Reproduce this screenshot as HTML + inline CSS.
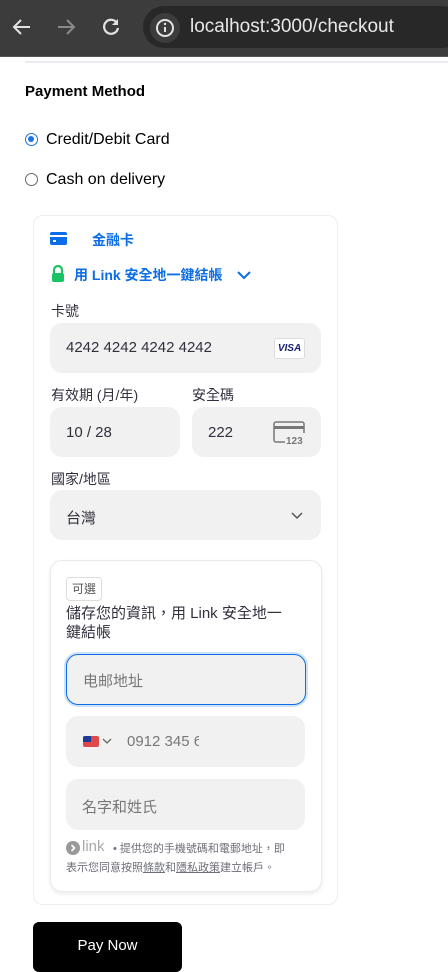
<!DOCTYPE html>
<html><head><meta charset="utf-8"><style>
*{margin:0;padding:0;box-sizing:border-box}
body{width:448px;height:965px;overflow:hidden;background:#fff;font-family:"Liberation Sans","Noto Sans CJK TC",sans-serif;position:relative;color:#30313d}
.a{position:absolute}
.in{position:absolute;background:#f1f1f1;border-radius:12px}
.lbl{position:absolute;font-size:14px;color:#30313d}
.t{position:absolute;font-size:15px;color:#30313d}
</style></head><body>
<div class="a" style="left:0;top:0;width:448px;height:56px;background:#3c3c3c"></div>
<div class="a" style="left:143px;top:6px;width:320px;height:42px;background:#282828;border-radius:21px"></div>
<div class="a" style="left:150px;top:13px;width:30px;height:30px;background:#3c3c3c;border-radius:15px"></div>
<svg class="a" style="left:10px;top:16px" width="24" height="22" viewBox="0 0 24 22"><path d="M20 11H5M11 4l-7 7 7 7" stroke="#e3e3e3" stroke-width="2" fill="none"/></svg>
<svg class="a" style="left:54px;top:16px" width="24" height="22" viewBox="0 0 24 22"><path d="M4 11h15M13 4l7 7-7 7" stroke="#8a8a8a" stroke-width="2" fill="none"/></svg>
<svg class="a" style="left:100px;top:16px" width="22" height="22" viewBox="0 0 22 22"><path d="M17 7A7 7 0 1 0 18 12" stroke="#e3e3e3" stroke-width="2.2" fill="none"/><path d="M18 3v6h-6z" fill="#e3e3e3"/></svg>
<svg class="a" style="left:155px;top:18px" width="20" height="20" viewBox="0 0 20 20"><circle cx="10" cy="10" r="8" stroke="#e3e3e3" stroke-width="2" fill="none"/><path d="M10 9v5" stroke="#e3e3e3" stroke-width="2"/><circle cx="10" cy="6" r="1.2" fill="#e3e3e3"/></svg>
<div class="a" style="left:190px;top:16px;font-size:19px;color:#e8e8e8">localhost:3000/checkout</div>
<div class="a" style="left:0;top:56px;width:448px;height:1px;background:#555"></div>
<div class="a" style="left:25px;top:61px;width:423px;height:2px;background:#e8ecf0"></div>
<div class="a" style="left:25px;top:83px;font-size:15px;font-weight:bold;color:#000">Payment Method</div>
<div class="a" style="left:25px;top:133px;width:13px;height:13px;border-radius:50%;border:1.5px solid #1a73e8;background:#fff"><div class="a" style="left:2px;top:2px;width:6px;height:6px;border-radius:50%;background:#1a73e8"></div></div>
<div class="a" style="left:46px;top:131px;font-size:16px;color:#000">Credit/Debit Card</div>
<div class="a" style="left:25px;top:173px;width:13px;height:13px;border-radius:50%;border:1px solid #666"></div>
<div class="a" style="left:46px;top:171px;font-size:16px;color:#000">Cash on delivery</div>

<div class="a" style="left:33px;top:215px;width:305px;height:690px;border:1px solid #eee;border-radius:10px"></div>
<div class="a" style="left:50px;top:232px;width:17px;height:13px;background:#0b6ee8;border-radius:2px"><div class="a" style="left:0;top:3px;width:17px;height:2px;background:#fff"></div><div class="a" style="left:3px;top:8px;width:3px;height:2px;background:#fff"></div></div>
<div class="a" style="left:92px;top:230px;font-size:14px;font-weight:bold;color:#0b6ee8">金融卡</div>
<svg class="a" style="left:51px;top:265px" width="14" height="18" viewBox="0 0 14 18"><path d="M3 8V5a4 4 0 0 1 8 0v3" stroke="#1ac464" stroke-width="2.2" fill="none"/><rect x="1" y="8" width="12" height="9" rx="2" fill="#1ac464"/></svg>
<div class="a" style="left:74px;top:265px;font-size:14px;font-weight:bold;color:#0b6ee8">用 Link 安全地一鍵結帳</div>
<svg class="a" style="left:236px;top:269px" width="16" height="12" viewBox="0 0 16 12"><path d="M2 3l6 6 6-6" stroke="#0b6ee8" stroke-width="2" fill="none"/></svg>

<div class="lbl" style="left:51px;top:301px">卡號</div>
<div class="in" style="left:50px;top:323px;width:271px;height:50px"></div>
<div class="t" style="left:66px;top:339px">4242 4242 4242 4242</div>
<div class="a" style="left:274px;top:338px;width:31px;height:21px;background:#fff;border:1px solid #ddd;border-radius:3px;font-size:10px;font-weight:bold;font-style:italic;color:#1a1f71;text-align:center;line-height:19px">VISA</div>
<div class="lbl" style="left:51px;top:385px">有效期 (月/年)</div>
<div class="lbl" style="left:192px;top:385px">安全碼</div>
<div class="in" style="left:50px;top:407px;width:130px;height:50px"></div>
<div class="in" style="left:192px;top:407px;width:129px;height:50px"></div>
<div class="t" style="left:66px;top:424px">10 / 28</div>
<div class="t" style="left:208px;top:424px">222</div>
<svg class="a" style="left:273px;top:421px" width="33" height="24" viewBox="0 0 33 24"><path d="M12 21H3a2 2 0 0 1-2-2V3a2 2 0 0 1 2-2h26a2 2 0 0 1 2 2v9" stroke="#777" stroke-width="1.5" fill="none"/><rect x="1" y="5" width="30" height="3" fill="#777"/><text x="13" y="23" font-size="10" font-weight="bold" fill="#777" font-family="Liberation Sans">123</text></svg>
<div class="lbl" style="left:51px;top:469px">國家/地區</div>
<div class="in" style="left:50px;top:490px;width:271px;height:50px"></div>
<div class="t" style="left:66px;top:507px">台灣</div>
<svg class="a" style="left:290px;top:511px" width="14" height="10" viewBox="0 0 14 10"><path d="M2 2l5 5 5-5" stroke="#555" stroke-width="1.5" fill="none"/></svg>

<div class="a" style="left:50px;top:560px;width:272px;height:332px;border:1px solid #eaeaea;border-radius:12px;box-shadow:0 2px 4px rgba(0,0,0,.08)"></div>
<div class="a" style="left:66px;top:577px;width:36px;height:24px;border:1px solid #ddd;border-radius:4px;font-size:12px;color:#555;text-align:center;line-height:22px">可選</div>
<div class="a" style="left:66px;top:604px;width:250px;font-size:15px;line-height:19px;color:#30313d">儲存您的資訊，用 Link 安全地一<br>鍵結帳</div>
<div class="in" style="left:66px;top:654px;width:240px;height:51px;border:1.5px solid #0b6ee8;box-shadow:0 0 0 2px rgba(11,110,232,.2)"></div>
<div class="t" style="left:83px;top:670px;color:#777">电邮地址</div>
<div class="in" style="left:66px;top:716px;width:239px;height:51px"></div>
<div class="a" style="left:83px;top:736px;width:16px;height:11px;background:#e04848;border-radius:2px"><div class="a" style="left:0;top:0;width:8px;height:6px;background:#1a3a9b;border-radius:2px 0 0 0"></div></div>
<svg class="a" style="left:102px;top:737px" width="10" height="8" viewBox="0 0 10 8"><path d="M1 2l4 4 4-4" stroke="#666" stroke-width="1.3" fill="none"/></svg>
<div class="t" style="left:127px;top:733px;color:#777;width:72px;overflow:hidden;white-space:nowrap">0912 345 678</div>
<svg class="a" style="left:66px;top:841px" width="14" height="14" viewBox="0 0 14 14"><circle cx="7" cy="7" r="7" fill="#999"/><path d="M5.5 4l3 3-3 3" stroke="#fff" stroke-width="1.6" fill="none"/></svg>
<div class="in" style="left:66px;top:779px;width:239px;height:51px"></div>
<div class="t" style="left:82px;top:796px;color:#777">名字和姓氏</div>
<div class="a" style="left:82px;top:838px;font-size:15px;color:#aaa">link</div>
<div class="a" style="left:113px;top:840px;font-size:11px;color:#6d6e78">• 提供您的手機號碼和電郵地址，即</div>
<div class="a" style="left:66px;top:859px;font-size:11px;color:#6d6e78">表示您同意按照<u>條款</u>和<u>隱私政策</u>建立帳戶。</div>

<div class="a" style="left:33px;top:922px;width:149px;height:50px;background:#000;border-radius:6px"></div>
<div class="a" style="left:33px;top:937px;width:149px;text-align:center;font-size:15px;color:#fff">Pay Now</div>
</body></html>
